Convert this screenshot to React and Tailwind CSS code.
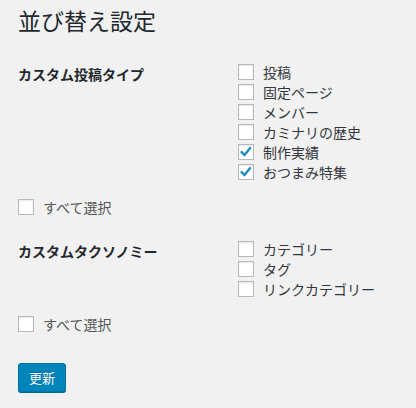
import React from "react";

const font = { fontFamily: '"Noto Sans CJK JP", "Noto Sans", sans-serif' };

function Box({ checked }) {
  return (
    <span className="relative flex h-4 w-4 shrink-0 items-center justify-center border border-[#b4b9be] bg-white shadow-[inset_0_1px_2px_rgba(0,0,0,0.1)]">
      {checked && (
        <svg viewBox="0 0 16 16" className="absolute left-[0px] top-[0px] h-[14px] w-[14px]">
          <path d="M3 8.2 L6.3 11.5 L12.6 3.6" fill="none" stroke="#1e8cbe" strokeWidth="2.6" strokeLinecap="square" strokeLinejoin="miter" />
        </svg>
      )}
    </span>
  );
}

function Item({ label, checked }) {
  return (
    <div className="flex h-5 items-center">
      <Box checked={checked} />
      <span className="ml-[9px] text-[14px] leading-5 text-[#32373c]">{label}</span>
    </div>
  );
}

function SelectAll() {
  return (
    <div className="flex h-5 items-center">
      <Box />
      <span className="ml-[9px] text-[14px] leading-5 text-[#555]">すべて選択</span>
    </div>
  );
}

export default function App() {
  return (
    <div className="min-h-[408px] w-[416px] bg-[#f1f1f1] px-[18px]" style={font}>
      <h1 className="pt-[5px] text-[23px] font-normal leading-[30px] text-[#23282d]">並び替え設定</h1>
      <div className="mt-[27px] flex">
        <div className="w-[220px] pt-[2px] text-[14px] font-bold leading-5 text-[#23282d]">カスタム投稿タイプ</div>
        <div className="flex flex-col">
          <Item label="投稿" />
          <Item label="固定ページ" />
          <Item label="メンバー" />
          <Item label="カミナリの歴史" />
          <Item label="制作実績" checked />
          <Item label="おつまみ特集" checked />
        </div>
      </div>
      <div className="mt-[15px]">
        <SelectAll />
      </div>
      <div className="mt-[22px] flex">
        <div className="w-[220px] pt-[2px] text-[14px] font-bold leading-5 text-[#23282d]">カスタムタクソノミー</div>
        <div className="flex flex-col">
          <Item label="カテゴリー" />
          <Item label="タグ" />
          <Item label="リンクカテゴリー" />
        </div>
      </div>
      <div className="mt-[15px]">
        <SelectAll />
      </div>
      <button className="mt-[29px] h-[29px] rounded-[3px] border border-[#0073aa] bg-[#0085ba] px-[10px] text-[13px] leading-[26px] text-white shadow-[0_1px_0_#006799] [text-shadow:0_-1px_1px_#006799]">
        更新
      </button>
    </div>
  );
}
